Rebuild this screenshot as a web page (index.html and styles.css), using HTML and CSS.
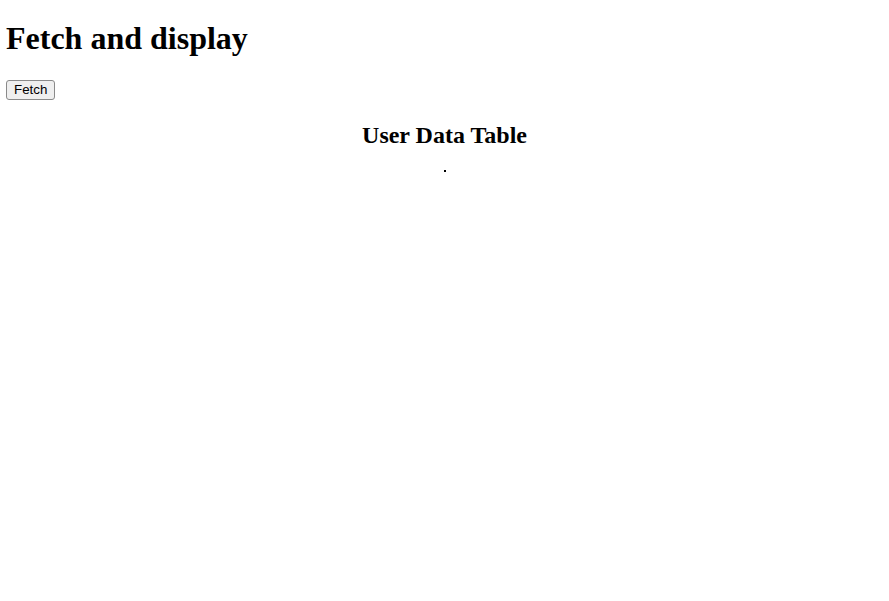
FILE: index.html
```html
<!DOCTYPE html>
<html>
<head>
<meta charset="utf-8">
<title>Fetch and display</title>
<link rel="stylesheet" href="styles.css">
</head>
<body class="page">
<h1 class="title">Fetch and display</h1>
<button class="fetch-btn">Fetch</button>
<h2 class="table-title">User Data Table</h2>
<table class="data-table"><tbody></tbody></table>
</body>
</html>
```
FILE: styles.css
```css
html {
  margin: 0;
  padding: 0;
}
.page {
  margin: 0;
  padding: 0 6px;
  font-family: "Liberation Serif", serif;
  background: #fff;
  color: #000;
}
.title {
  font-size: 32px;
  line-height: normal;
  font-weight: bold;
  margin: 20px 0 22.5px;
}
.fetch-btn {
  display: block;
  box-sizing: border-box;
  font-family: "Liberation Sans", Arial, sans-serif;
  font-size: 13.33px;
  height: 20px;
  padding: 0 7px;
  margin: 0;
  border: 1px solid #8a8a8a;
  border-radius: 3px;
  background: #efefef;
  color: #000;
}
.table-title {
  font-size: 24px;
  line-height: normal;
  font-weight: bold;
  text-align: center;
  margin: 22.6px 0 20.8px;
}
.data-table {
  margin: 0 auto;
  border: 1px solid #000;
}
```
